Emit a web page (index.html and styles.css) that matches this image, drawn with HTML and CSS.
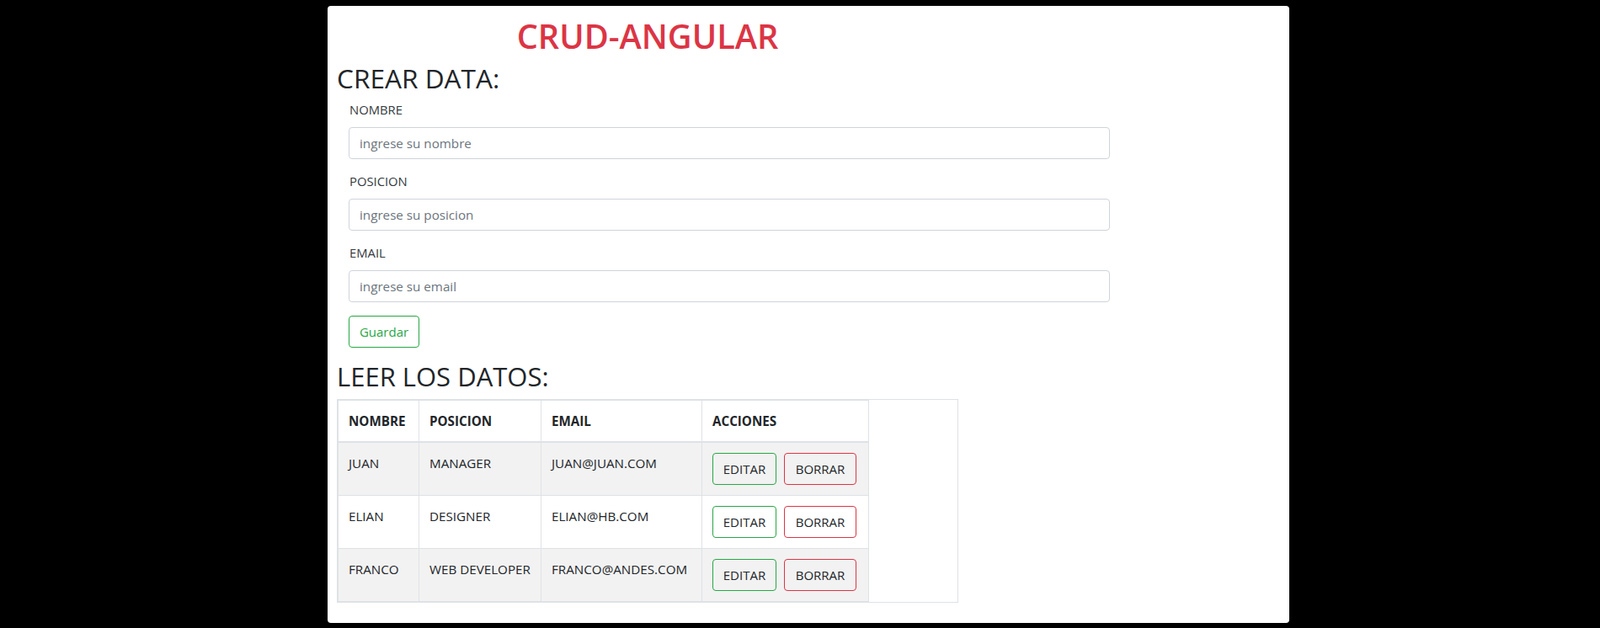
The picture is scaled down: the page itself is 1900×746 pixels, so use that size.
FILE: index.html
```html
<!DOCTYPE html>
<html lang="es">
<head>
<meta charset="utf-8">
<title>CRUD-ANGULAR</title>
<link rel="stylesheet" href="styles.css">
</head>
<body>
<div class="panel">
  <div class="title-col">
    <h1 class="title">CRUD-ANGULAR</h1>
  </div>
  <h2 class="section">CREAR DATA:</h2>
  <form class="form">
    <div class="group">
      <label class="label">NOMBRE</label>
      <input class="input" type="text" placeholder="ingrese su nombre">
    </div>
    <div class="group">
      <label class="label">POSICION</label>
      <input class="input" type="text" placeholder="ingrese su posicion">
    </div>
    <div class="group">
      <label class="label">EMAIL</label>
      <input class="input" type="text" placeholder="ingrese su email">
    </div>
    <button type="button" class="btn btn-save">Guardar</button>
  </form>
  <h2 class="section section-read">LEER LOS DATOS:</h2>
  <div class="table-wrap">
    <table class="data">
      <colgroup>
        <col class="c1"><col class="c2"><col class="c3"><col class="c4">
      </colgroup>
      <thead>
        <tr><th>NOMBRE</th><th>POSICION</th><th>EMAIL</th><th>ACCIONES</th></tr>
      </thead>
      <tbody>
        <tr class="odd">
          <td>JUAN</td><td>MANAGER</td><td>JUAN@JUAN.COM</td>
          <td><button type="button" class="btn btn-edit">EDITAR</button><button type="button" class="btn btn-del">BORRAR</button></td>
        </tr>
        <tr>
          <td>ELIAN</td><td>DESIGNER</td><td>ELIAN@HB.COM</td>
          <td><button type="button" class="btn btn-edit">EDITAR</button><button type="button" class="btn btn-del">BORRAR</button></td>
        </tr>
        <tr class="odd">
          <td>FRANCO</td><td>WEB DEVELOPER</td><td>FRANCO@ANDES.COM</td>
          <td><button type="button" class="btn btn-edit">EDITAR</button><button type="button" class="btn btn-del">BORRAR</button></td>
        </tr>
      </tbody>
    </table>
  </div>
</div>
</body>
</html>
```
FILE: styles.css
```css
* { box-sizing: border-box; }
html, body { margin: 0; }
body {
  background: #000;
  padding: 7px 0 0 20px;
  font-family: "Open Sans", "Noto Sans", sans-serif;
  color: #212529;
}
.panel {
  width: 1142px;
  height: 733px;
  margin: 0 auto;
  background: #fff;
  border-radius: 4px;
  padding: 12px 10px 0 11px;
}
.title-col { width: 738px; text-align: center; }
.title {
  margin: 0;
  font-size: 39.7px;
  line-height: 48px;
  font-weight: 600;
  color: #dc3545;
}
.section {
  margin: 8px 0 0;
  font-size: 31.6px;
  line-height: 36px;
  font-weight: 400;
  color: #212529;
}
.form { width: 904px; margin: 10px 0 0 14px; }
.group { margin-bottom: 17px; }
.label {
  display: block;
  font-size: 14.8px;
  line-height: 18px;
  margin-bottom: 12px;
  padding-left: 1px;
  color: #343a40;
}
.input {
  display: block;
  width: 100%;
  height: 38px;
  padding: 6px 12px;
  font-family: inherit;
  font-size: 15.2px;
  color: #495057;
  border: 1px solid #ced4da;
  border-radius: 4px;
  background: #fff;
}
.input::placeholder { color: #6c757d; }
.group:last-of-type { margin-bottom: 16px; }
.btn {
  display: inline-block;
  height: 38px;
  padding: 0 11px;
  font-family: inherit;
  font-size: 15px;
  line-height: 36px;
  background: transparent;
  border: 1px solid;
  border-radius: 4px;
  vertical-align: middle;
}
.btn-save { width: 84px; color: #28a745; border-color: #28a745; }
.section-read { margin-top: 15px; font-size: 31px; line-height: 38px; }
.table-wrap {
  width: 738px;
  margin-top: 8px;
  border: 1px solid #dee2e6;
}
.data {
  border-collapse: collapse;
  table-layout: fixed;
  width: 630px;
  font-size: 15.2px;
}
.c1 { width: 96px; }
.c2 { width: 145px; }
.c3 { width: 191px; }
.c4 { width: 198px; }
.data th, .data td {
  border: 1px solid #dee2e6;
  padding: 12px;
  text-align: left;
  vertical-align: top;
  line-height: 24px;
  white-space: nowrap;
}
.data th { font-weight: 700; font-size: 15.2px; border-bottom-width: 2px; }
.data tr.odd td { background: #f2f2f2; }
.data td:last-child { padding-right: 0; }
.btn-edit { width: 76px; border-color: #28a745; color: #212529; margin-right: 9px; padding: 0; }
.btn-del { width: 86px; border-color: #dc3545; color: #212529; padding: 0; }
```
